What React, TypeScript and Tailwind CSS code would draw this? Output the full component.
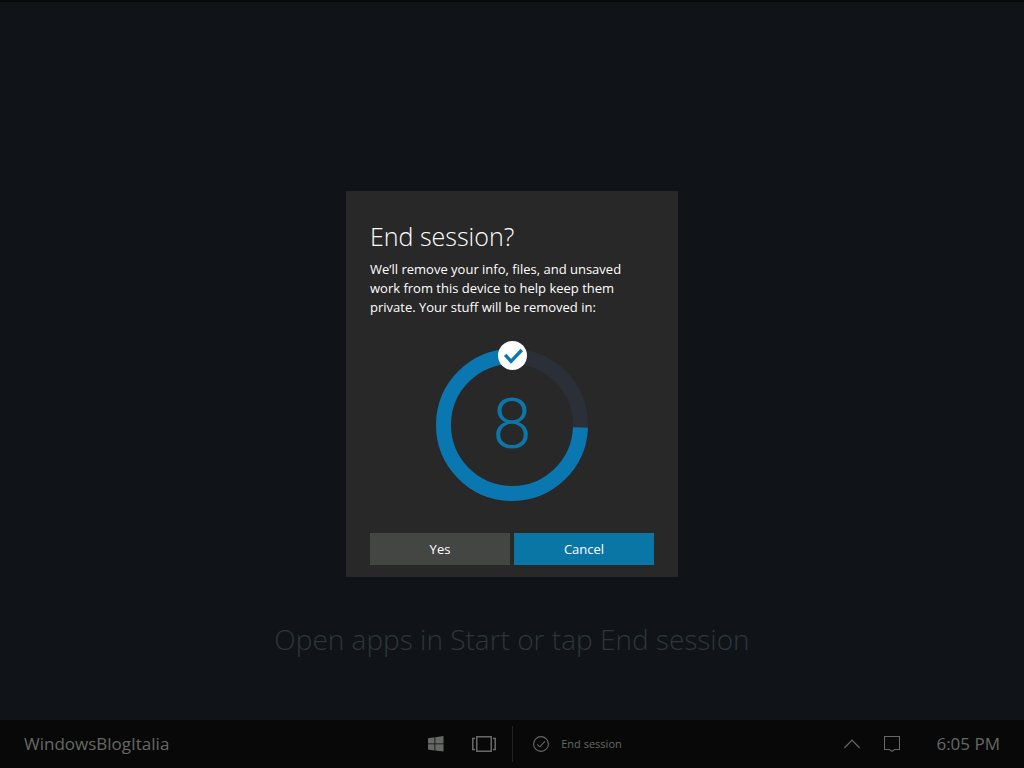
import React from 'react';

interface SvgIconProps {
  className?: string;
}

const WindowsIcon: React.FC<SvgIconProps> = ({ className }) => (
  <svg className={className} width="16" height="16" viewBox="0 0 16 16" fill="currentColor" aria-hidden="true">
    <path d="M0 2.2 6.5 1.3V7.5H0zM7.3 1.2 15.5 0V7.5H7.3zM0 8.3H6.5V14.5L0 13.6zM7.3 8.3H15.5V15.6L7.3 14.5z" />
  </svg>
);

const TaskViewIcon: React.FC<SvgIconProps> = ({ className }) => (
  <svg className={className} width="24" height="16" viewBox="0 0 24 16" fill="none" stroke="currentColor" aria-hidden="true">
    <rect x="4.75" y="0.75" width="14.5" height="14.5" strokeWidth="1.5" />
    <path d="M3 2.5H0.75V13.5H3M21 2.5H23.25V13.5H21" strokeWidth="1.5" />
  </svg>
);

const CheckCircleIcon: React.FC<SvgIconProps> = ({ className }) => (
  <svg className={className} width="16" height="16" viewBox="0 0 16 16" fill="none" stroke="currentColor" aria-hidden="true">
    <circle cx="8" cy="8" r="7.4" strokeWidth="1.1" />
    <path d="M4.2 8.3 6.8 10.8 12 5.4" strokeWidth="1.1" />
  </svg>
);

const ChevronUpIcon: React.FC<SvgIconProps> = ({ className }) => (
  <svg className={className} width="16" height="10" viewBox="0 0 16 10" fill="none" stroke="currentColor" aria-hidden="true">
    <path d="M0.4 9 8 1.2 15.6 9" strokeWidth="1.2" />
  </svg>
);

const MessageIcon: React.FC<SvgIconProps> = ({ className }) => (
  <svg className={className} width="16" height="16" viewBox="0 0 16 16" fill="none" stroke="currentColor" aria-hidden="true">
    <path d="M0.5 0.5H15.5V13.5H10.5L8 15.4 5.5 13.5H0.5Z" strokeWidth="1.1" />
  </svg>
);

const CountdownRing: React.FC<{ seconds: number }> = ({ seconds }) => (
  <div className="relative mx-auto h-40 w-[152px]">
    <svg width="152" height="160" viewBox="0 0 152 160" fill="none" aria-hidden="true">
      <circle cx="76" cy="84" r="68.5" stroke="#2a2f38" strokeWidth="15" />
      <path d="M144.45 86.5A68.5 68.5 0 1 1 76 15.5" stroke="#0a77b0" strokeWidth="15" />
      <circle cx="76.5" cy="14.5" r="14.5" fill="#fff" />
      <path d="M69.2 13.8 75 20.3 85.8 9" stroke="#0a77b0" strokeWidth="3.4" />
    </svg>
    <div className="absolute inset-0 flex items-center justify-center pt-1.5 font-['Roboto',sans-serif] text-[70px] leading-none font-light text-[#0a77a8]">
      {seconds}
    </div>
  </div>
);

const EndSessionDialog: React.FC = () => (
  <div className="fixed inset-0 flex items-center justify-center">
    <div
      role="dialog"
      aria-labelledby="end-session-title"
      className="w-full max-w-[332px] bg-[#282828] px-6 pt-7 pb-3 text-white"
    >
      <h1 id="end-session-title" className="text-[25px] leading-[34px] font-light">End session?</h1>
      <p className="mt-[7px] text-[13px] leading-[19px]">
        We’ll remove your info, files, and unsaved work from this device to help keep them private. Your stuff will be removed in:
      </p>
      <div className="mt-6 mb-8">
        <CountdownRing seconds={8} />
      </div>
      <div className="grid grid-cols-2 gap-1 text-[13px]">
        <button type="button" className="h-8 bg-[#444643] pt-0.5">Yes</button>
        <button type="button" className="h-8 bg-[#0a76a6] pt-0.5">Cancel</button>
      </div>
    </div>
  </div>
);

const Taskbar: React.FC = () => (
  <footer className="grid h-12 grid-cols-[1fr_auto_1fr] items-center bg-[#080808] px-6 text-[#666866]">
    <span className="text-[17px]">WindowsBlogItalia</span>
    <div className="flex items-center pl-[26px]">
      <button type="button" aria-label="Start"><WindowsIcon /></button>
      <button type="button" aria-label="Task view" className="ml-7"><TaskViewIcon /></button>
      <div className="ml-4 h-9 w-px bg-[#222]" />
      <button type="button" className="ml-5 flex items-center gap-3 text-[11px]">
        <CheckCircleIcon />
        End session
      </button>
    </div>
    <div className="flex items-center justify-end">
      <button type="button" aria-label="Show hidden icons"><ChevronUpIcon /></button>
      <button type="button" aria-label="Notifications" className="ml-6"><MessageIcon /></button>
      <time className="ml-9 text-[17px]">6:05 PM</time>
    </div>
  </footer>
);

export default function App() {
  return (
    <div className="flex min-h-screen flex-col border-t-2 border-[#06080a] bg-[#101418] font-['Open_Sans',sans-serif]">
      <main className="flex flex-1 items-end justify-center pb-14">
        <p className="text-[28px] leading-[50px] font-light text-[#2d363b]">Open apps in Start or tap End session</p>
      </main>
      <Taskbar />
      <EndSessionDialog />
    </div>
  );
}
